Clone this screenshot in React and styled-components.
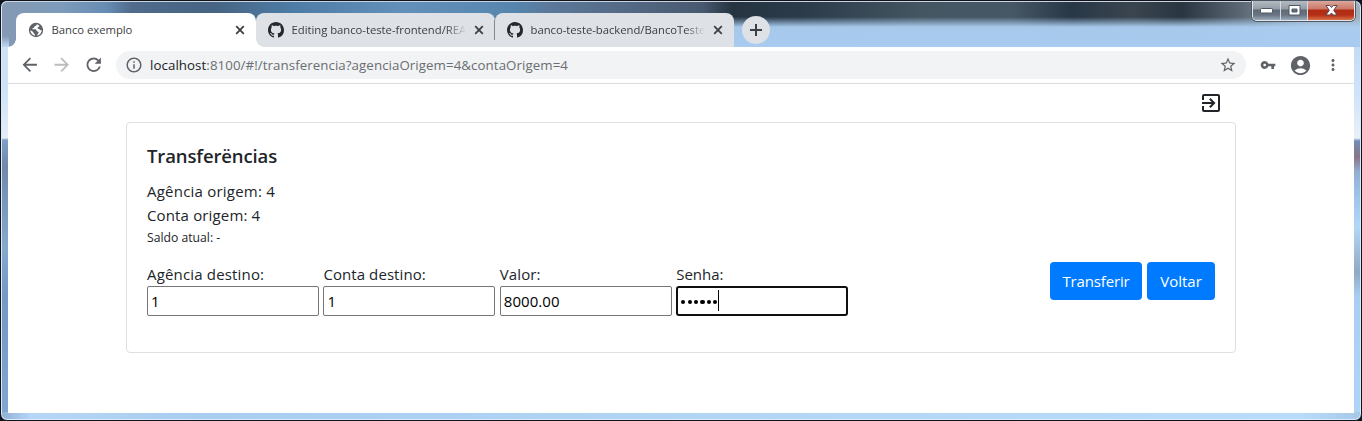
import React from 'react';
import styled, { createGlobalStyle, css } from 'styled-components';
import { MdArrowBack, MdArrowForward, MdRefresh, MdInfoOutline, MdStarBorder, MdVpnKey, MdAccountCircle, MdMoreVert, MdExitToApp } from 'react-icons/md';

const Global = createGlobalStyle`
  * { box-sizing: border-box; }
  body { margin: 0; background: #10141c; font-family: "Open Sans", "Noto Sans", sans-serif; overflow: hidden; }
`;

const Window = styled.div`
  position: relative;
  display: flex;
  flex-direction: column;
  width: 1362px;
  height: 421px;
  padding: 0 7px 7px;
  border: 1px solid #10131b;
  border-radius: 7px;
  box-shadow: inset 0 0 0 1px #dcebf9;
  background:
    linear-gradient(90deg, #8fb0d4 0, #b5d6f7 30px, #a9cdef 200px, #b5d8f8 900px, #badcfb 1300px, #a6c8e8 100%) 0 411px / 100% 11px no-repeat,
    linear-gradient(180deg, #cfe2f6 0, #cde2f8 40px, #e4edf8 91px, #7f9fc6 93px, #7089ad 120px, #86a9d0 200px, #7598c4 250px, #86add7 100%) 0 46px / 8px 100% no-repeat,
    linear-gradient(180deg, #c5dcf6 0, #cfe4fb 50px, #e9f1f8 91px, #6f8db5 94px, #8a7488 110px, #90b0d2 125px, #a0c4ea 150px, #b2d7f7 180px, #8fa9c5 225px, #a8cff2 250px, #b2d7f7 100%) 1353px 46px / 8px 100% no-repeat,
    #a8cbf0;
`;

const TitleBar = styled.header`
  position: relative;
  display: flex;
  align-items: flex-end;
  height: 46px;
  margin: 0 -6px;
  padding-left: 14px;
  border-top: 1px solid #cbd5df;
  border-radius: 6px 6px 0 0;
  background:
    linear-gradient(180deg, transparent 0, transparent 15px, rgba(170, 205, 240, .97) 25px, #a9cbf0 100%) 725px 0 / 640px 100% no-repeat,
    linear-gradient(180deg, transparent 0, transparent 34px, #b9d3ee 44px) 0 0 / 7px 100% no-repeat,
    linear-gradient(90deg, #8499b3 0, #7d9bbb 60px, #668cb3 105px, #506b8b 130px, #466482 210px, #4d7ca6 290px, #6390b9 400px, #5686ae 510px, #5b7899 550px, #526681 640px, #485a70 700px, #263441 730px, #2b3b49 800px, #455663 920px, #465766 1010px, #283746 1070px, #3a4550 1130px, #293540 1180px, #5c6874 1240px, #9caab9 1300px, #a0adbb 100%);
`;

const tabColors = { active: '#ffffff', idle: '#dee1e6' };

const Tab = styled.div`
  position: relative;
  display: flex;
  align-items: center;
  width: ${p => p.$width}px;
  height: 34px;
  padding: 0 9px 0 12px;
  border-radius: 8px 8px 0 0;
  background: ${p => (p.$active ? tabColors.active : tabColors.idle)};
  color: #3c4043;
  ${p => p.$active && css`
    z-index: 1;
    &::before {
      content: '';
      position: absolute;
      bottom: 0;
      left: -8px;
      width: 8px;
      height: 8px;
      background: radial-gradient(circle at 0 0, transparent 7.5px, #fff 8px);
    }
  `}
  ${p => p.$joined && css`
    background: radial-gradient(circle at 8px 0, #dee1e6 7.5px, #fff 8px) 0 100% / 8px 8px no-repeat,
      linear-gradient(#dee1e6, #dee1e6) 0 0 / 100% calc(100% - 8px) no-repeat,
      linear-gradient(#dee1e6, #dee1e6) 8px 100% / 100% 8px no-repeat;
  `}
  ${p => p.$divider && css`
    &::after {
      content: '';
      position: absolute;
      right: 0;
      top: 7px;
      width: 1px;
      height: 20px;
      background: #85898d;
    }
  `}
`;

const TabTitle = styled.span`
  flex: 1;
  min-width: 0;
  margin: 0 6px 0 7.5px;
  white-space: nowrap;
  font-size: 11.3px;
  line-height: 18px;
  letter-spacing: ${p => p.$tracking}px;
  ${p => p.$fade && 'mask-image: linear-gradient(90deg, #000 calc(100% - 20px), transparent);'}
`;

const Glyph = styled.svg`
  display: block;
  flex: none;
`;

const NewTab = styled.div`
  display: grid;
  place-items: center;
  width: 28px;
  height: 28px;
  margin: 0 0 3px 8px;
  border-radius: 50%;
  background: #dee1e6;
`;

const Controls = styled.div`
  position: absolute;
  top: -1px;
  right: 5px;
  display: flex;
  height: 20px;
  border: 1px solid #e3e7ec;
  border-top: 0;
  border-radius: 0 0 5px 5px;
  overflow: hidden;
  box-shadow: 0 0 0 1px #4c5866;
`;

const Control = styled.div`
  display: grid;
  place-items: center;
  width: ${p => p.$width}px;
  border-left: ${p => (p.$first ? 0 : '1px solid #d5dae0')};
  background: ${p => p.$close
    ? 'linear-gradient(180deg, #dba79c 0, #cb7767 8px, #b12b13 9px, #b52f16 14px, #d77148 100%)'
    : 'linear-gradient(180deg, #b4bac1 0, #939ca6 8px, #5f6a76 9px, #697583 14px, #9caaba 100%)'};
`;

const Toolbar = styled.div`
  display: flex;
  align-items: center;
  height: 37px;
  flex: none;
  padding: 0 12px 0 11px;
  background: #fff;
  border-bottom: 1px solid #dadce0;
  color: #5f6368;
  svg { flex: none; }
`;

const NavButtons = styled.div`
  display: flex;
  gap: 10.5px;
  margin-right: 11.5px;
`;

const AddressBar = styled.div`
  display: flex;
  align-items: center;
  flex: 1;
  height: 28px;
  padding: 0 9px;
  border-radius: 14px;
  background: #f1f3f4;
`;

const Url = styled.span`
  flex: 1;
  margin-left: 7px;
  font-size: 13.3px;
  line-height: 20px;
  letter-spacing: 0.07px;
  color: #6a6e73;
  b { font-weight: 400; color: #202124; }
`;

const ToolbarActions = styled.div`
  display: flex;
  align-items: center;
  gap: 13px;
  margin-left: 14px;
  svg:last-child { margin-left: -1px; }
`;

const Page = styled.main`
  flex: 1;
  padding: 0 118px;
  background: #fff;
  color: #212529;
`;

const PageHeader = styled.div`
  display: flex;
  justify-content: flex-end;
  align-items: center;
  height: 38px;
  padding-right: 13px;
`;

const Card = styled.section`
  height: 231px;
  padding: 21px 20px 20px;
  border: 1px solid #dfdfdf;
  border-radius: 4px;
`;

const Title = styled.h1`
  margin: 0 0 11px;
  font-size: 18.5px;
  line-height: 24px;
  font-weight: 600;
  letter-spacing: -0.12px;
`;

const Line = styled.div`
  font-size: ${p => (p.$small ? 12.2 : 15)}px;
  line-height: ${p => (p.$small ? 21 : 24)}px;
  letter-spacing: ${p => p.$tracking || 0}px;
`;

const Form = styled.form`
  display: flex;
  justify-content: space-between;
  align-items: flex-start;
  margin-top: 14px;
`;

const Fields = styled.div`
  display: flex;
  gap: 4.4px;
`;

const Field = styled.label`
  display: flex;
  flex-direction: column;
  width: 172px;
  font-size: 15px;
  line-height: 24px;
  letter-spacing: ${p => p.$tracking || 0}px;
`;

const Input = styled.div`
  display: flex;
  align-items: center;
  height: 30px;
  padding: 0 ${p => (p.$focused ? 2 : 3)}px;
  border: ${p => (p.$focused ? '2px solid #101010' : '1px solid #767676')};
  border-radius: ${p => (p.$focused ? 3 : 2)}px;
  color: #000;
  letter-spacing: 0.05px;
`;

const Dot = styled.i`
  width: 4.2px;
  height: 4.2px;
  margin: 2px 1.1px 0;
  border-radius: 50%;
  background: #000;
`;

const Caret = styled.i`
  width: 1px;
  height: 21px;
  margin-bottom: 1px;
  background: #000;
`;

const Buttons = styled.div`
  display: flex;
  gap: 5px;
`;

const Button = styled.button`
  width: ${p => p.$width}px;
  height: 38px;
  padding: 0;
  border: 0;
  border-radius: 4px;
  background: #007bff;
  color: #fff;
  font: 15px/24px "Open Sans", sans-serif;
  letter-spacing: ${p => p.$tracking || 0}px;
`;

const Globe = () => (
  <Glyph width="16" height="16" viewBox="0 0 16 16">
    <circle cx="8" cy="8" r="7.2" fill="#5f6368" />
    <path d="M8.9 2.2c-.3.7-.2 1.2-1 1.5-.9.3-1.600.5-1.600 1.300 0 .8-.5 1-1.300 1.100-.7.1-.8.700-.3 1.100h2.500c.9 0 1.400.7 1.400 1.500 0 .6.600.800 1.100.800.7 0 .9.500.9 1.100 0 .8-.7 1-.9 1.600-.2.700-.7 1.200-1.500 1.500 3-.1 5.500-2.600 5.600-5.500-.6.300-1.400.200-1.700-.4-.3-.7-.9-.9-1.600-.9-.8 0-1.100-.7-.8-1.300.3-.6 1-.6 1.500-1 .3-.3.2-.8-.1-1.200-.7-.6-1.400-1-2.200-1.200zM2.200 8.300c.1 2.700 2.100 4.900 4.700 5.400v-1.500c-.9-.1-1.500-.7-1.500-1.600 0-.7-.4-.9-.9-1.200z" fill="#fff" />
  </Glyph>
);

const Octocat = () => (
  <Glyph width="16" height="16" viewBox="0 0 16 16" fill="#24292e">
    <path d="M8 0C3.58 0 0 3.58 0 8c0 3.54 2.29 6.53 5.47 7.59.4.07.55-.17.55-.38 0-.19-.01-.82-.01-1.49-2.01.37-2.53-.49-2.69-.94-.09-.23-.48-.94-.82-1.13-.28-.15-.68-.52-.01-.53.63-.01 1.08.58 1.23.82.72 1.21 1.87.87 2.33.66.07-.52.28-.87.51-1.07-1.78-.2-3.64-.89-3.64-3.95 0-.87.31-1.59.82-2.15-.08-.2-.36-1.02.08-2.12 0 0 .67-.21 2.2.82.64-.18 1.32-.27 2-.27s1.36.09 2 .27c1.53-1.04 2.2-.82 2.2-.82.44 1.1.16 1.92.08 2.12.51.56.82 1.27.82 2.15 0 3.07-1.87 3.75-3.65 3.95.29.25.54.73.54 1.48 0 1.07-.01 1.93-.01 2.2 0 .21.15.46.55.38A8.01 8.01 0 0016 8c0-4.42-3.58-8-8-8z" />
  </Glyph>
);

const CloseTab = () => (
  <Glyph width="14" height="14" viewBox="0 0 14 14" stroke="#3c4043" strokeWidth="1.8">
    <path d="M3.2 3.2l7.6 7.6M10.8 3.2l-7.6 7.6" />
  </Glyph>
);

export default function App() {
  return (
    <>
      <Global />
      <Window>
        <TitleBar>
          <Tab $active $width={240}>
            <Globe />
            <TabTitle $tracking={-0.03}>Banco exemplo</TabTitle>
            <CloseTab />
          </Tab>
          <Tab $joined $divider $width={239}>
            <Octocat />
            <TabTitle $fade $tracking={-0.03}>Editing banco-teste-frontend/REA</TabTitle>
            <CloseTab />
          </Tab>
          <Tab $width={239}>
            <Octocat />
            <TabTitle $fade $tracking={-0.03}>banco-teste-backend/BancoTeste</TabTitle>
            <CloseTab />
          </Tab>
          <NewTab>
            <Glyph width="12" height="12" viewBox="0 0 12 12" stroke="#3c4043" strokeWidth="2">
              <path d="M0 6h12M6 0v12" />
            </Glyph>
          </NewTab>
          <Controls>
            <Control $first $width={27}>
              <Glyph width="13" height="6" viewBox="0 0 13 6">
                <rect x=".5" y=".5" width="12" height="4.5" rx="1" fill="#fff" stroke="#505866" />
              </Glyph>
            </Control>
            <Control $width={27}>
              <Glyph width="13" height="11" viewBox="0 0 13 11">
                <path d="M1 .5h11v9.5H1zM4 4h5v3H4z" fill="#fff" fillRule="evenodd" stroke="#505866" />
              </Glyph>
            </Control>
            <Control $close $width={47}>
              <Glyph width="13" height="11" viewBox="0 0 13 11">
                <path d="M1 .5h3.7l1.8 2 1.8-2H12L8.7 5.3 12 10H8.3L6.5 8l-1.8 2H1l3.3-4.7z" fill="#fff" stroke="#5a4552" />
              </Glyph>
            </Control>
          </Controls>
        </TitleBar>
        <Toolbar>
          <NavButtons>
            <MdArrowBack size={21.5} />
            <MdArrowForward size={21.5} color="#babcbe" />
            <MdRefresh size={21.5} />
          </NavButtons>
          <AddressBar>
            <MdInfoOutline size={18} />
            <Url><b>localhost</b>:8100/#!/transferencia?agenciaOrigem=4&amp;contaOrigem=4</Url>
            <MdStarBorder size={18} />
          </AddressBar>
          <ToolbarActions>
            <MdVpnKey size={16} />
            <MdAccountCircle size={23} />
            <MdMoreVert size={18} />
          </ToolbarActions>
        </Toolbar>
        <Page>
          <PageHeader>
            <MdExitToApp size={24} />
          </PageHeader>
          <Card>
            <Title>Transferëncias</Title>
            <Line $tracking={0.22}>Agência origem: 4</Line>
            <Line $tracking={0.15}>Conta origem: 4</Line>
            <Line $small>Saldo atual: -</Line>
            <Form>
              <Fields>
                <Field $tracking={0.17}>Agência destino:<Input>1</Input></Field>
                <Field $tracking={0.08}>Conta destino:<Input>1</Input></Field>
                <Field $tracking={0.1}>Valor:<Input>8000.00</Input></Field>
                <Field>Senha:
                  <Input $focused>
                    {Array.from({ length: 6 }, (_, i) => <Dot key={i} />)}
                    <Caret />
                  </Input>
                </Field>
              </Fields>
              <Buttons>
                <Button type="button" $width={92} $tracking={-0.15}>Transferir</Button>
                <Button type="button" $width={68}>Voltar</Button>
              </Buttons>
            </Form>
          </Card>
        </Page>
      </Window>
    </>
  );
}
